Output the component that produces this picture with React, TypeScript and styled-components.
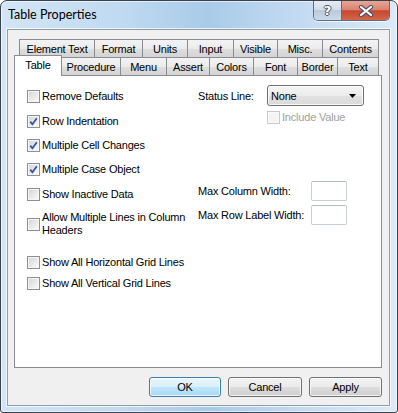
import React from "react";
import styled, { createGlobalStyle } from "styled-components";

const GlobalStyle = createGlobalStyle`
  html, body {
    margin: 0;
    padding: 0;
    background: #ffffff;
  }
  body {
    font-family: "Liberation Sans", Arial, sans-serif;
    font-size: 11px;
    letter-spacing: -0.2px;
    color: #000;
  }
`;

const backTabs = [
  { label: "Element Text", w: 76 },
  { label: "Format", w: 49 },
  { label: "Units", w: 46 },
  { label: "Input", w: 47 },
  { label: "Visible", w: 45 },
  { label: "Misc.", w: 46 },
  { label: "Contents", w: 57 },
];

const frontTabs = [
  { label: "Table", w: 48, selected: true },
  { label: "Procedure", w: 60 },
  { label: "Menu", w: 47 },
  { label: "Assert", w: 44 },
  { label: "Colors", w: 45 },
  { label: "Font", w: 45 },
  { label: "Border", w: 41 },
  { label: "Text", w: 42 },
];

const Check = ({ checked, disabled }: { checked?: boolean; disabled?: boolean }) => (
  <Box $disabled={disabled}>
    {checked && (
      <svg width="9" height="9" viewBox="0 0 9 9">
        <path d="M1.2 4.6 L3.4 7.2 L7.8 1.2" fill="none" stroke="#3a56a0" strokeWidth="1.8" />
      </svg>
    )}
  </Box>
);

const App = () => {
  return (
    <>
      <GlobalStyle />
      <Window>
        <TitleBar>
          <Title>Table Properties</Title>
          <CaptionButtons>
            <HelpButton>?</HelpButton>
            <CloseButton>
              <svg width="16" height="12" viewBox="0 0 16 12">
                <path d="M3 2 L13 10 M13 2 L3 10" stroke="#47536a" strokeWidth="4.2" strokeLinecap="round" />
                <path d="M3 2 L13 10 M13 2 L3 10" stroke="#ffffff" strokeWidth="2.2" strokeLinecap="round" />
              </svg>
            </CloseButton>
          </CaptionButtons>
        </TitleBar>
        <Client>
          <TabRow $indent={5}>
            {backTabs.map((t) => (
              <Tab key={t.label} $w={t.w}>
                {t.label}
              </Tab>
            ))}
          </TabRow>
          <TabRow $indent={0}>
            {frontTabs.map((t) =>
              t.selected ? (
                <SelectedTab key={t.label} $w={t.w}>
                  {t.label}
                </SelectedTab>
              ) : (
                <Tab key={t.label} $w={t.w}>
                  {t.label}
                </Tab>
              )
            )}
          </TabRow>
          <Panel>
            <LeftColumn>
              <CheckRow $mt={14}>
                <Check />
                <Label>Remove Defaults</Label>
              </CheckRow>
              <CheckRow $mt={12}>
                <Check checked />
                <Label>Row Indentation</Label>
              </CheckRow>
              <CheckRow $mt={11}>
                <Check checked />
                <Label>Multiple Cell Changes</Label>
              </CheckRow>
              <CheckRow $mt={11}>
                <Check checked />
                <Label>Multiple Case Object</Label>
              </CheckRow>
              <CheckRow $mt={12}>
                <Check />
                <Label>Show Inactive Data</Label>
              </CheckRow>
              <CheckRow $mt={10}>
                <Check />
                <Label>
                  Allow Multiple Lines in Column
                  <br />
                  Headers
                </Label>
              </CheckRow>
              <CheckRow $mt={19}>
                <Check />
                <Label>Show All Horizontal Grid Lines</Label>
              </CheckRow>
              <CheckRow $mt={8}>
                <Check />
                <Label>Show All Vertical Grid Lines</Label>
              </CheckRow>
            </LeftColumn>
            <RightColumn>
              <FieldRow $mt={9}>
                <FieldLabel $w={69}>Status Line:</FieldLabel>
                <Select>
                  <span>None</span>
                  <svg width="7" height="4" viewBox="0 0 7 4">
                    <path d="M0 0 H7 L3.5 4 Z" fill="#000" />
                  </svg>
                </Select>
              </FieldRow>
              <CheckRow $mt={5} $indent={69}>
                <Check disabled />
                <Label $disabled>Include Value</Label>
              </CheckRow>
              <FieldRow $mt={57}>
                <FieldLabel $w={113}>Max Column Width:</FieldLabel>
                <TextBox />
              </FieldRow>
              <FieldRow $mt={4}>
                <FieldLabel $w={113}>Max Row Label Width:</FieldLabel>
                <TextBox />
              </FieldRow>
            </RightColumn>
          </Panel>
          <Footer>
            <Button $w={72} $default>
              OK
            </Button>
            <Button $w={74}>Cancel</Button>
            <Button $w={73}>Apply</Button>
          </Footer>
        </Client>
      </Window>
    </>
  );
};

export default App;

const Window = styled.div`
  width: 398px;
  height: 413px;
  box-sizing: border-box;
  border: 1px solid #39424c;
  border-radius: 7px 7px 3px 3px;
  background: linear-gradient(
    90deg,
    #d3e5f6 0%,
    #c0daf1 30%,
    #a9cbe9 52%,
    #bdd7f0 70%,
    #dbeaf8 100%
  );
  box-shadow: inset 0 0 0 1px rgba(255, 255, 255, 0.6);
  display: flex;
  flex-direction: column;
  overflow: hidden;
`;

const TitleBar = styled.div`
  height: 28px;
  display: flex;
  align-items: flex-start;
  justify-content: space-between;
  padding: 0 7px 0 7px;
  flex-shrink: 0;
`;

const Title = styled.div`
  font-family: "Segoe UI", Lato, "Liberation Sans", sans-serif;
  font-size: 12.5px;
  letter-spacing: 0;
  line-height: 16px;
  margin-top: 6px;
  color: #000;
`;

const CaptionButtons = styled.div`
  display: flex;
  height: 19px;
  border: 1px solid #5d6f84;
  border-top: none;
  border-radius: 0 0 5px 5px;
  overflow: hidden;
  box-shadow: 0 1px 0 rgba(255, 255, 255, 0.7);
`;

const HelpButton = styled.div`
  width: 27px;
  height: 19px;
  border-right: 1px solid #5d6f84;
  background: linear-gradient(#e4ecf5 0%, #d2dde9 45%, #b9cadb 50%, #c9daea 100%);
  color: #fff;
  font-family: "DejaVu Sans", sans-serif;
  font-weight: bold;
  font-size: 13px;
  letter-spacing: 0;
  line-height: 19px;
  text-align: center;
  text-shadow: 1px 0 0 #4a5668, -1px 0 0 #4a5668, 0 1px 0 #4a5668, 0 -1px 0 #4a5668;
`;

const CloseButton = styled.div`
  width: 47px;
  height: 19px;
  background: linear-gradient(#e8a696 0%, #d98572 45%, #c7472e 52%, #d2664b 100%);
  display: flex;
  align-items: center;
  justify-content: center;
`;

const Client = styled.div`
  flex: 1;
  margin: 0 7px 6px 6px;
  border: 1px solid #8f9cab;
  box-shadow: 0 0 0 1px rgba(255, 255, 255, 0.75);
  background: #f0f0f0;
  padding: 9px 7px 0 6px;
  display: flex;
  flex-direction: column;
`;

const TabRow = styled.div<{ $indent: number }>`
  display: flex;
  align-items: flex-end;
  height: 18px;
  padding-left: ${(p) => p.$indent}px;
`;

const Tab = styled.div<{ $w: number }>`
  width: ${(p) => p.$w}px;
  height: 18px;
  box-sizing: border-box;
  margin-right: -1px;
  border: 1px solid #898c95;
  border-bottom: none;
  background: linear-gradient(#f3f3f3 0%, #ebebeb 50%, #dedede 52%, #d4d4d4 100%);
  display: flex;
  align-items: center;
  justify-content: center;
  white-space: nowrap;
  flex-shrink: 0;
`;

const SelectedTab = styled(Tab)`
  height: 21px;
  margin-bottom: -1px;
  background: #ffffff;
  position: relative;
  z-index: 2;
  padding-bottom: 2px;
`;

const Panel = styled.div`
  width: 368px;
  height: 293px;
  box-sizing: border-box;
  border: 1px solid #898c95;
  background: #ffffff;
  display: flex;
  padding-left: 12px;
  position: relative;
  z-index: 1;
`;

const LeftColumn = styled.div`
  width: 171px;
  display: flex;
  flex-direction: column;
`;

const RightColumn = styled.div`
  display: flex;
  flex-direction: column;
`;

const CheckRow = styled.div<{ $mt: number; $indent?: number }>`
  display: flex;
  align-items: center;
  margin-top: ${(p) => p.$mt}px;
  padding-left: ${(p) => p.$indent || 0}px;
`;

const Box = styled.div<{ $disabled?: boolean }>`
  width: 13px;
  height: 13px;
  box-sizing: border-box;
  flex-shrink: 0;
  border: 1px solid ${(p) => (p.$disabled ? "#c9c9c9" : "#8e8f8f")};
  background: ${(p) =>
    p.$disabled ? "#f4f4f4" : "linear-gradient(135deg, #d3d4d6 0%, #ececed 60%, #fbfbfb 100%)"};
  box-shadow: inset 0 0 0 1px ${(p) => (p.$disabled ? "#fafafa" : "#f6f6f6")};
  display: flex;
  align-items: center;
  justify-content: center;
`;

const Label = styled.div<{ $disabled?: boolean }>`
  margin-left: 2px;
  line-height: 13px;
  white-space: nowrap;
  color: ${(p) => (p.$disabled ? "#a0a0a0" : "#000")};
`;

const FieldRow = styled.div<{ $mt: number }>`
  display: flex;
  align-items: center;
  margin-top: ${(p) => p.$mt}px;
`;

const FieldLabel = styled.div<{ $w: number }>`
  width: ${(p) => p.$w}px;
  white-space: nowrap;
`;

const Select = styled.div`
  width: 97px;
  height: 21px;
  box-sizing: border-box;
  border: 1px solid #707070;
  border-radius: 3px;
  background: linear-gradient(#f4f4f4 0%, #ececec 50%, #e2e2e2 52%, #dadada 100%);
  box-shadow: inset 0 0 0 1px rgba(255, 255, 255, 0.8);
  display: flex;
  align-items: center;
  justify-content: space-between;
  padding: 0 7px 0 3px;
`;

const TextBox = styled.div`
  width: 36px;
  height: 20px;
  box-sizing: border-box;
  border: 1px solid #c8ced7;
  border-top-color: #b4bac3;
  border-radius: 2px;
  background: #ffffff;
`;

const Footer = styled.div`
  display: flex;
  justify-content: flex-end;
  gap: 7px;
  margin-top: 9px;
`;

const Button = styled.div<{ $w: number; $default?: boolean }>`
  width: ${(p) => p.$w}px;
  height: 20px;
  box-sizing: border-box;
  border: 1px solid ${(p) => (p.$default ? "#3c7fb1" : "#707070")};
  border-radius: 3px;
  background: ${(p) =>
    p.$default
      ? "linear-gradient(#eaf6fd 0%, #d9f0fc 50%, #bee6fd 52%, #a7d9f5 100%)"
      : "linear-gradient(#f2f2f2 0%, #ebebeb 50%, #dddddd 52%, #cfcfcf 100%)"};
  box-shadow: inset 0 0 0 1px rgba(255, 255, 255, 0.75);
  display: flex;
  align-items: center;
  justify-content: center;
`;
